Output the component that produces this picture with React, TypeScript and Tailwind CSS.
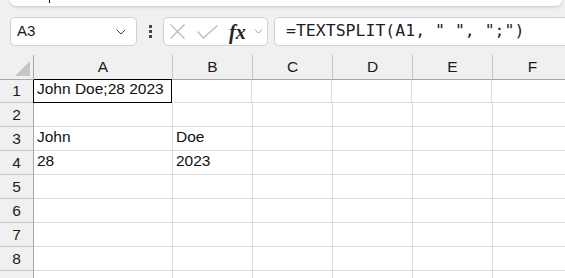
import { ChevronDown } from "lucide-react";

const cols = [
  { key: "A", w: "w-[139px]" },
  { key: "B", w: "w-[80px]" },
  { key: "C", w: "w-[80px]" },
  { key: "D", w: "w-[80px]" },
  { key: "E", w: "w-[80px]" },
  { key: "F", w: "w-[80px]" },
];

const data: Record<string, string> = {
  A1: "John Doe;28 2023",
  A3: "John",
  B3: "Doe",
  A4: "28",
  B4: "2023",
};

const rows = [1, 2, 3, 4, 5, 6, 7, 8, 9];

export default function App() {
  return (
    <div
      className="w-[565px] h-[278px] overflow-hidden bg-[#f0f0f0] flex flex-col"
      style={{ fontFamily: '"Liberation Sans", Arial, sans-serif' }}
    >
      {/* Ribbon edge */}
      <div className="shrink-0 ml-[10px] mr-[3px] h-[6px] bg-white rounded-b-[6px] shadow-[0_1px_3px_rgba(0,0,0,0.18)] relative">
        <div className="absolute left-[39px] top-0 w-px h-[3px] bg-black" />
      </div>

      {/* Formula bar */}
      <div className="shrink-0 flex items-center mt-[11px] pl-[10px] h-[29px]">
        <div className="shrink-0 w-[127px] h-[29px] bg-white border border-[#d1d1d1] rounded-[5px] flex items-center justify-between pl-[6px] pr-[7px]">
          <span className="text-[15px] text-[#1b1b1b]">A3</span>
          <ChevronDown className="w-[16px] h-[16px] text-[#333]" strokeWidth={1.4} />
        </div>
        <div className="shrink-0 w-[26px] flex flex-col items-center gap-[2px]">
          <div className="w-[3px] h-[3px] bg-[#444]" />
          <div className="w-[3px] h-[3px] bg-[#444]" />
          <div className="w-[3px] h-[3px] bg-[#444]" />
        </div>
        <div className="shrink-0 w-[105px] h-[29px] bg-white border border-[#d1d1d1] rounded-[5px] flex items-center pl-[6px]">
          <svg width="15" height="15" viewBox="0 0 15 15" className="shrink-0">
            <path d="M0.5 0.5 L14.5 14.5 M14.5 0.5 L0.5 14.5" stroke="#b8b8b8" strokeWidth="1.2" fill="none" />
          </svg>
          <svg width="21" height="14" viewBox="0 0 21 14" className="shrink-0 ml-[12px]">
            <path d="M0.5 6.5 L6.5 12.8 L20.5 0.5" stroke="#b8b8b8" strokeWidth="1.2" fill="none" />
          </svg>
          <span
            className="ml-[11px] text-[20px] italic font-bold text-[#222] leading-none"
            style={{ fontFamily: '"Liberation Serif", "Times New Roman", serif' }}
          >
            fx
          </span>
          <ChevronDown className="w-[13px] h-[13px] ml-[6px] text-[#8a8a8a]" strokeWidth={1.5} />
        </div>
        <div className="shrink-0 ml-[6px] w-[310px] h-[29px] bg-white border border-[#d1d1d1] rounded-[5px] flex items-center pl-[11px]">
          <span
            className="text-[16.5px] text-[#1b1b2b] whitespace-pre"
            style={{ fontFamily: '"DejaVu Sans Mono", "Liberation Mono", monospace' }}
          >
            =TEXTSPLIT(A1, " ", ";")
          </span>
        </div>
      </div>

      {/* Grid */}
      <div className="shrink-0 mt-[9px] flex flex-col">
        <div className="flex h-[25px]">
          <div className="w-[34px] shrink-0 bg-[#f0f0f0] border-r border-b border-[#a6a6a6] relative">
            <div className="absolute right-[3px] bottom-[3px] w-0 h-0 border-l-[15px] border-l-transparent border-b-[15px] border-b-[#c6c6c6]" />
          </div>
          {cols.map((c) => (
            <div
              key={c.key}
              className={`${c.w} shrink-0 bg-[#f0f0f0] border-r border-r-[#c8c8c8] border-b border-b-[#a6a6a6] flex items-center justify-center text-[15.5px] text-[#1b1b1b]`}
            >
              {c.key}
            </div>
          ))}
        </div>
        {rows.map((r) => (
          <div key={r} className={`flex shrink-0 ${r === 1 ? "h-[23px]" : "h-[24px]"}`}>
            <div className="w-[34px] shrink-0 bg-[#f0f0f0] border-r border-r-[#a6a6a6] border-b border-b-[#c8c8c8] flex items-center justify-center text-[15.5px] text-[#1b1b1b]">
              {r}
            </div>
            {cols.map((c) => {
              const id = `${c.key}${r}`;
              const boxed = id === "A1";
              return (
                <div
                  key={id}
                  className={`${c.w} shrink-0 bg-white flex items-end pb-[2px] pl-[3px] text-[15.5px] text-[#111] whitespace-nowrap ${
                    boxed
                      ? "border border-black -ml-px -mt-px"
                      : "border-r border-b border-[#dadada]"
                  }`}
                >
                  {data[id] ?? ""}
                </div>
              );
            })}
          </div>
        ))}
      </div>
    </div>
  );
}
